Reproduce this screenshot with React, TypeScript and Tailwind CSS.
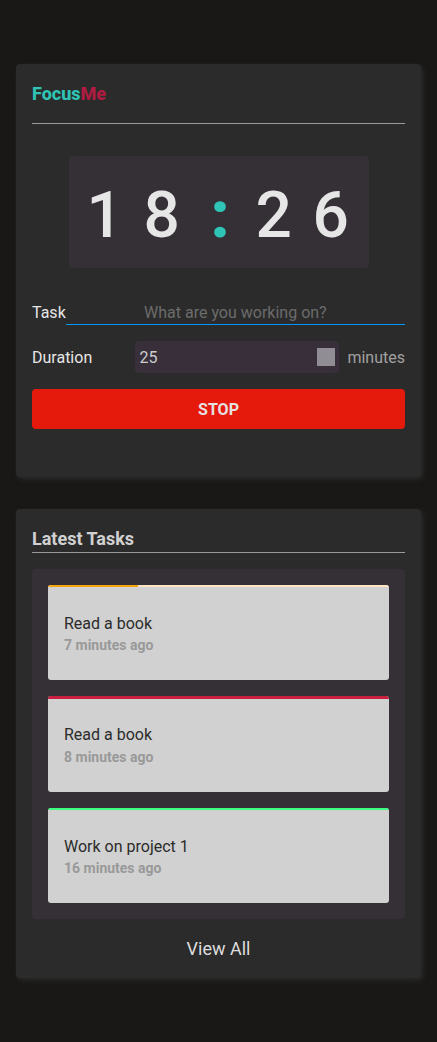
type Task = { title: string; ago: string; strip: string; track: string; width: string; text: string };

const tasks: Task[] = [
  { title: "Read a book", ago: "7 minutes ago", strip: "h-[2px] bg-[#f5a50c]", track: "bg-[#ffe4c4]", width: "26.4%", text: "pt-px leading-[23px]" },
  { title: "Read a book", ago: "8 minutes ago", strip: "h-[3px] bg-[#c91f3f]", track: "bg-[#f3b5c0]", width: "100%", text: "leading-6" },
  { title: "Work on project 1", ago: "16 minutes ago", strip: "h-[2px] bg-[#3cff7f]", track: "bg-[#3cff7f]", width: "100%", text: "pt-px leading-[23px]" },
];

function Timer() {
  return (
    <div className="mx-auto mt-8 flex h-28 w-[300px] items-center rounded bg-[#352f36] pl-[18px] pt-2 text-[64px] font-medium leading-none text-[#e6e6e6]">
      <span className="w-[57px]">1</span>
      <span className="w-[67px]">8</span>
      <span className="w-[45px] font-black text-[#2ec4b6]">:</span>
      <span className="w-[57px]">2</span>
      <span>6</span>
    </div>
  );
}

function TaskCard({ task }: { task: Task }) {
  return (
    <li className="overflow-hidden rounded-[3px] bg-[#d1d1d1]">
      <div className={task.track}>
        <div className={task.strip} style={{ width: task.width }} />
      </div>
      <div className="h-[93px] px-4 pt-6">
        <p className={`text-base text-[#2b2b2b] ${task.text}`}>{task.title}</p>
        <p className="text-sm font-bold leading-5 text-[#999999]">{task.ago}</p>
      </div>
    </li>
  );
}

export default function App() {
  return (
    <main className="flex min-h-[1042px] flex-col gap-8 bg-[#191816] px-4 pt-16 font-['Roboto',sans-serif] text-[#e6e6e6]">
      <section className="h-[413px] rounded bg-[#2b2b2b] px-4 shadow-[2px_2px_5px_#2b2b2b]">
        <header className="h-[60px] border-b border-[#999999] pt-4 text-lg font-extrabold leading-[27px] text-[#2ec4b6]">
          Focus<span className="text-[#b01b41]">Me</span>
        </header>
        <Timer />
        <label className="mt-8 flex h-[25px] items-start">
          <span className="leading-[26px]">Task</span>
          <input
            className="h-[25px] min-w-0 flex-1 border-b border-[#0496ff] bg-transparent text-center outline-none placeholder:text-[#6b6b6b]"
            placeholder="What are you working on?"
          />
        </label>
        <div className="mt-4 flex h-8 items-center">
          <span className="w-[103px] pt-0.5">Duration</span>
          <div className="flex h-8 w-[204px] items-center justify-between rounded bg-[#382f3a] px-1 text-[#cccccc]">
            <span className="pl-[0.5px] pt-0.5">25</span>
            <span className="size-[18px] bg-[#918d94]" />
          </div>
          <span className="ml-[8.5px] pt-0.5 text-[#a0a0a0]">minutes</span>
        </div>
        <button className="mt-4 h-10 w-full rounded bg-[#e5190c] pt-0.5 font-bold text-[#e6e0e0]">STOP</button>
      </section>

      <section className="h-[469px] rounded bg-[#2b2b2b] px-4 pt-4 shadow-[2px_2px_5px_#2b2b2b]">
        <h2 className="h-7 border-b border-[#999999] text-lg font-bold leading-[27px] text-[#d1d1d1]">Latest Tasks</h2>
        <ul className="mt-4 flex flex-col gap-4 rounded bg-[#352f36] p-4">
          {tasks.map((task) => (
            <TaskCard key={task.ago} task={task} />
          ))}
        </ul>
        <a className="mt-4 block text-center text-lg leading-[27px] text-[#dddddd]">View All</a>
      </section>
    </main>
  );
}
